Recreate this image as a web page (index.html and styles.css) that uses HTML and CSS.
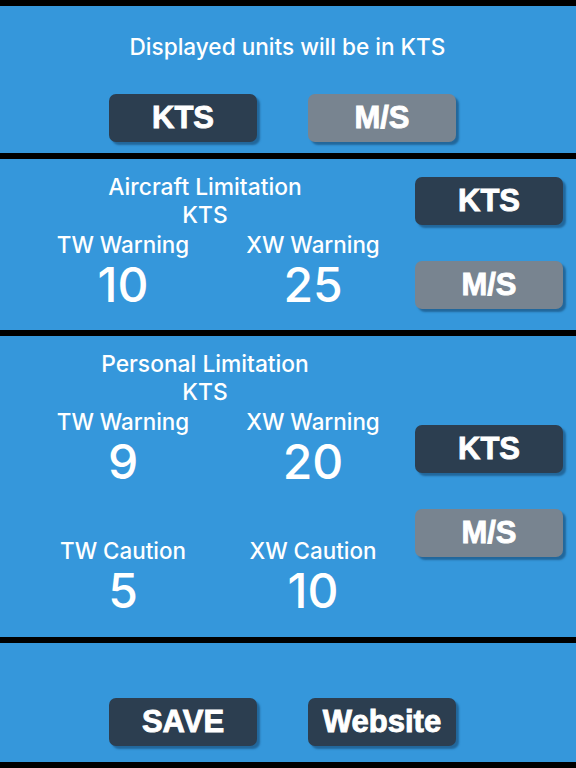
FILE: index.html
```html
<!DOCTYPE html>
<html>
<head>
<meta charset="utf-8">
<link rel="stylesheet" href="styles.css">
</head>
<body>
<div class="screen">
  <section class="panel units">
    <div class="caption">Displayed units will be in KTS</div>
    <div class="btn-row">
      <div class="btn dark">KTS</div>
      <div class="btn gray">M/S</div>
    </div>
  </section>

  <section class="panel limit aircraft">
    <div class="values">
      <div class="title">Aircraft Limitation</div>
      <div class="title">KTS</div>
      <div class="grid">
        <div class="cell"><div class="label">TW Warning</div><div class="num">10</div></div>
        <div class="cell"><div class="label">XW Warning</div><div class="num">25</div></div>
      </div>
    </div>
    <div class="side">
      <div class="btn dark">KTS</div>
      <div class="btn gray">M/S</div>
    </div>
  </section>

  <section class="panel limit personal">
    <div class="values">
      <div class="title">Personal Limitation</div>
      <div class="title">KTS</div>
      <div class="grid">
        <div class="cell"><div class="label">TW Warning</div><div class="num">9</div></div>
        <div class="cell"><div class="label">XW Warning</div><div class="num">20</div></div>
      </div>
      <div class="grid caution">
        <div class="cell"><div class="label">TW Caution</div><div class="num">5</div></div>
        <div class="cell"><div class="label">XW Caution</div><div class="num">10</div></div>
      </div>
    </div>
    <div class="side">
      <div class="btn dark">KTS</div>
      <div class="btn gray">M/S</div>
    </div>
  </section>

  <section class="panel footer">
    <div class="btn-row">
      <div class="btn dark">SAVE</div>
      <div class="btn dark">Website</div>
    </div>
  </section>
</div>
</body>
</html>
```

FILE: styles.css
```css
html, body {
  margin: 0;
  padding: 0;
  background: #000;
}

.screen {
  width: 576px;
  height: 768px;
  background: #000;
  display: flex;
  flex-direction: column;
  gap: 6px;
  padding: 6px 0;
  box-sizing: border-box;
  font-family: Inter, "Noto Sans", sans-serif;
  color: #fff;
}

.panel {
  background: #3597db;
  box-sizing: border-box;
}

.units {
  height: 147px;
  padding-top: 29px;
}

.caption {
  text-align: center;
  font-size: 22.6px;
  font-weight: 500;
  line-height: 24px;
  margin-left: -1px;
}

.btn-row {
  display: flex;
  gap: 51px;
  padding-left: 109px;
}

.units .btn-row {
  margin-top: 35px;
}

.btn {
  width: 148px;
  height: 48px;
  border-radius: 7px;
  box-shadow: 3px 3px 2px #22679b;
  font-family: "Liberation Sans", Arial, sans-serif;
  font-weight: bold;
  font-size: 31px;
  line-height: 48px;
  text-align: center;
  color: #fff;
  -webkit-text-stroke: 0.9px #fff;
}

.dark {
  background: #2c3e50;
}

.gray {
  background: #788490;
}

.limit {
  display: flex;
  padding-top: 14px;
}

.aircraft {
  height: 171px;
}

.personal {
  height: 301px;
}

.values {
  width: 387px;
  padding-left: 28px;
  box-sizing: border-box;
}

.title {
  text-align: center;
  font-size: 22.8px;
  font-weight: 500;
  line-height: 28px;
  padding-right: 5px;
}

.grid {
  display: grid;
  grid-template-columns: 190px 190px;
}

.cell {
  text-align: center;
}

.label {
  font-size: 22.4px;
  font-weight: 500;
  line-height: 32px;
}

.num {
  font-size: 48px;
  font-weight: 500;
  line-height: 48px;
}

.caution {
  margin-top: 49px;
}

.side {
  margin-left: 28px;
  display: flex;
  flex-direction: column;
  gap: 36px;
}

.aircraft .side {
  padding-top: 4px;
}

.personal .side {
  padding-top: 75px;
}

.footer {
  flex: 1;
  padding-top: 55px;
}
```
